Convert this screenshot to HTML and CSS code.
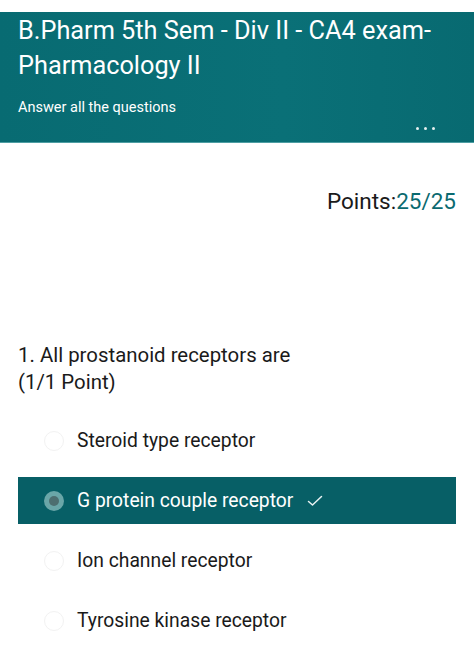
FILE: index.html
```html
<!DOCTYPE html>
<html>
<head>
<meta charset="utf-8">
<link rel="stylesheet" href="styles.css">
</head>
<body>
<header class="banner">
  <h1 class="title">B.Pharm 5th Sem - Div II - CA4 exam-<br>Pharmacology II</h1>
  <p class="subtitle">Answer all the questions</p>
  <div class="more"><span></span><span></span><span></span></div>
</header>
<div class="points">Points:<span class="score">25/25</span></div>
<section class="question">
  <p class="qtext">1. All prostanoid receptors are<br>(1/1 Point)</p>
  <ul class="options">
    <li class="option"><span class="radio"></span><span class="label">Steroid type receptor</span></li>
    <li class="option selected"><span class="radio"><span class="dot"></span></span><span class="label">G protein couple receptor</span>
      <svg class="check" width="16" height="12" viewBox="0 0 16 12"><path d="M1.5 6.5 L5.5 10 L14.5 1.5" fill="none" stroke="#e8f2f2" stroke-width="1.5" stroke-linecap="round" stroke-linejoin="round"/></svg></li>
    <li class="option"><span class="radio"></span><span class="label">Ion channel receptor</span></li>
    <li class="option"><span class="radio"></span><span class="label">Tyrosine kinase receptor</span></li>
  </ul>
</section>
</body>
</html>
```
FILE: styles.css
```css
html, body {
  margin: 0;
  padding: 0;
  background: #ffffff;
  font-family: Roboto, "Liberation Sans", Arial, sans-serif;
}
.banner {
  margin-top: 12px;
  height: 131px;
  box-sizing: border-box;
  background: linear-gradient(90deg, #086b72 0%, #0a7077 60%, #086a71 100%);
  border-bottom: 1px solid #4e9ea3;
  padding: 2px 18px 0 18px;
  color: #ffffff;
  display: flex;
  flex-direction: column;
}
.title {
  margin: 0;
  font-weight: 400;
  font-size: 25.3px;
  line-height: 34.5px;
}
.subtitle {
  margin: 16px 0 0 0;
  font-size: 14.5px;
  line-height: 18px;
}
.more {
  display: flex;
  gap: 5px;
  justify-content: flex-end;
  margin-top: 10px;
  padding-right: 21px;
}
.more span {
  width: 3px;
  height: 3px;
  border-radius: 50%;
  background: #e6f0f0;
}
.points {
  text-align: right;
  padding-right: 18px;
  margin-top: 45px;
  font-size: 22.5px;
  line-height: 26px;
  color: #1a1a1a;
}
.score {
  color: #0a6a70;
}
.question {
  margin-top: 128px;
}
.qtext {
  margin: 0;
  padding-left: 18px;
  font-size: 20.4px;
  line-height: 27px;
  color: #1a1a1a;
}
.options {
  list-style: none;
  margin: 21px 0 0 0;
  padding: 0;
}
.option {
  display: flex;
  align-items: center;
  height: 47px;
  margin: 0 18px 13px 18px;
  padding-left: 26px;
  font-size: 19.3px;
  color: #1a1a1a;
}
.radio {
  width: 20px;
  height: 20px;
  border-radius: 50%;
  border: 1px solid #f2f2f2;
  box-sizing: border-box;
  margin-right: 13px;
  display: flex;
  align-items: center;
  justify-content: center;
}
.selected {
  background: #075f66;
  color: #ffffff;
}
.selected .radio {
  background: #6aa6a8;
  border: none;
}
.dot {
  width: 10px;
  height: 10px;
  border-radius: 50%;
  background: #4d6e70;
}
.check {
  margin-left: 14px;
}
```
